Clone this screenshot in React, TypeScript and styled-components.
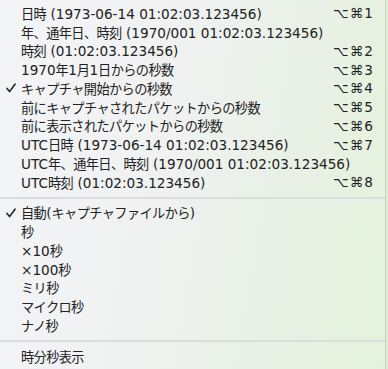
import React from 'react';
import styled, { createGlobalStyle } from 'styled-components';

type Item = { label: string; shortcut?: string; checked?: boolean };

const formats: Item[] = [
  { label: '日時 (1973-06-14 01:02:03.123456)', shortcut: '⌥⌘1' },
  { label: '年、通年日、時刻 (1970/001 01:02:03.123456)' },
  { label: '時刻 (01:02:03.123456)', shortcut: '⌥⌘2' },
  { label: '1970年1月1日からの秒数', shortcut: '⌥⌘3' },
  { label: 'キャプチャ開始からの秒数', shortcut: '⌥⌘4', checked: true },
  { label: '前にキャプチャされたパケットからの秒数', shortcut: '⌥⌘5' },
  { label: '前に表示されたパケットからの秒数', shortcut: '⌥⌘6' },
  { label: 'UTC日時 (1973-06-14 01:02:03.123456)', shortcut: '⌥⌘7' },
  { label: 'UTC年、通年日、時刻 (1970/001 01:02:03.123456)' },
  { label: 'UTC時刻 (01:02:03.123456)', shortcut: '⌥⌘8' },
];

const precisions: Item[] = [
  { label: '自動(キャプチャファイルから)', checked: true },
  { label: '秒' },
  { label: '×10秒' },
  { label: '×100秒' },
  { label: 'ミリ秒' },
  { label: 'マイクロ秒' },
  { label: 'ナノ秒' },
];

const CJK = /([\u3000-\u30ff\u4e00-\u9fff\uff00-\uffef]+)/;

const GlobalStyle = createGlobalStyle`
  html, body {
    margin: 0;
    padding: 0;
    background: #dfe9d8;
  }
`;

const Check = () => (
  <svg width="10" height="10" viewBox="0 0 10 10">
    <path d="M1 5.4 L3.6 8.6 L9 1.2" fill="none" stroke="#222" strokeWidth="1.6" strokeLinecap="round" strokeLinejoin="round" />
  </svg>
);

// Japanese runs are set a little tighter than the latin digits, as in the Hiragino menu font
const MixedText = ({ text }: { text: string }) => (
  <>
    {text.split(CJK).map((part, i) =>
      i % 2 === 1 ? <Ja key={i}>{part}</Ja> : <React.Fragment key={i}>{part}</React.Fragment>
    )}
  </>
);

const MenuRow = ({ item }: { item: Item }) => (
  <Row>
    <CheckCell>{item.checked && <Check />}</CheckCell>
    <Label>
      <MixedText text={item.label} />
    </Label>
    {item.shortcut && <Shortcut>{item.shortcut}</Shortcut>}
  </Row>
);

const App = () => (
  <>
    <GlobalStyle />
    <Menu>
      <Group>
        {formats.map((f) => (
          <MenuRow key={f.label} item={f} />
        ))}
      </Group>
      <Separator />
      <Group>
        {precisions.map((p) => (
          <MenuRow key={p.label} item={p} />
        ))}
      </Group>
      <Separator />
      <Group>
        <MenuRow item={{ label: '時分秒表示' }} />
      </Group>
    </Menu>
  </>
);

const Menu = styled.div`
  width: 386px;
  height: 369px;
  overflow: hidden;
  box-sizing: border-box;
  padding-top: 4px;
  background: linear-gradient(100deg, #f3f4f6 0%, #f0f2f2 40%, #e9f1e6 70%, #e4f2dc 100%);
  border-right: 1px solid #c9d6c0;
  font-family: 'DejaVu Sans', 'Noto Sans CJK JP', sans-serif;
  font-size: 13.6px;
  color: #222;
`;

const Group = styled.div`
  display: flex;
  flex-direction: column;
`;

const Row = styled.div`
  display: flex;
  align-items: center;
  height: 18.75px;
  padding-right: 11px;
  white-space: nowrap;
`;

const CheckCell = styled.span`
  width: 21px;
  flex: none;
  display: flex;
  justify-content: center;
  padding-left: 1px;
  box-sizing: border-box;
`;

const Label = styled.span`
  flex: 1;
`;

const Ja = styled.span`
  font-family: 'Noto Sans CJK JP', sans-serif;
  font-size: 13.2px;
  letter-spacing: -0.6px;
`;

const Shortcut = styled.span`
  flex: none;
  letter-spacing: 1px;
`;

const Separator = styled.div`
  height: 2px;
  margin: 5px 0;
  background: #dcdedd;
`;

export default App;
